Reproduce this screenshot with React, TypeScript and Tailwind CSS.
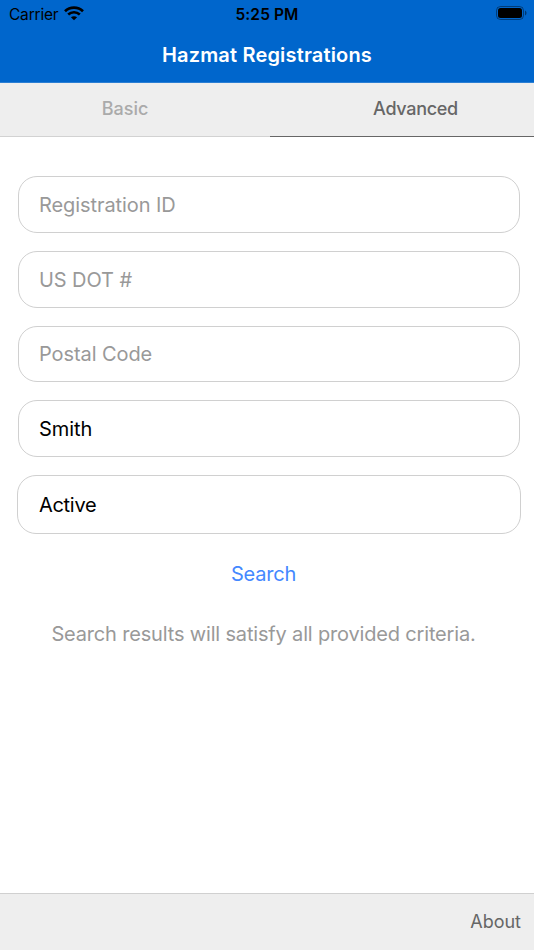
import { useState } from 'react';

const fields = [
  { placeholder: 'Registration ID', value: '' },
  { placeholder: 'US DOT #', value: '' },
  { placeholder: 'Postal Code', value: '' },
  { placeholder: 'Company Name', value: 'Smith' },
];

function StatusBar() {
  return (
    <div className="grid h-7 grid-cols-3 items-center pr-[7px] pl-[9px] text-[16px] text-black">
      <div className="flex items-center gap-1.5">
        <span className="pt-px text-[15.5px] tracking-[-0.2px]">Carrier</span>
        <svg className="-mt-0.5" width="20" height="15" viewBox="0 0 20 15" fill="none" stroke="black">
          <path d="M1 5.2C6 .4 14 .4 19 5.2" strokeWidth="2.7" />
          <path d="M4.2 8.5C7.4 5.5 12.6 5.5 15.8 8.5" strokeWidth="2.6" />
          <path d="M10 14.3L6.9 11.3C8.7 9.8 11.3 9.8 13.1 11.3Z" fill="black" stroke="none" />
        </svg>
      </div>
      <span className="pt-px pr-0.5 text-center text-[15.5px] font-semibold tracking-[0.1px]">5:25 PM</span>
      <svg className="-mt-0.5 justify-self-end" width="31" height="14" viewBox="0 0 31 14">
        <rect x="0.5" y="0.5" width="27" height="13" rx="4" fill="none" stroke="black" strokeOpacity="0.4" />
        <rect x="2" y="2" width="24" height="10" rx="2.5" fill="black" />
        <path d="M29 4.5C31 5.3 31 8.7 29 9.5Z" fill="black" fillOpacity="0.45" />
      </svg>
    </div>
  );
}

export default function App() {
  const [values, setValues] = useState(fields.map((field) => field.value));

  return (
    <div className="flex h-screen flex-col overflow-hidden bg-white font-['Inter',sans-serif]">
      <header className="h-[83px] border-b border-[#2b7fd4] bg-[#0066cc]">
        <StatusBar />
        <h1 className="pt-[12px] text-center text-[20px] leading-[30px] font-semibold tracking-[0.17px] text-white">
          Hazmat Registrations
        </h1>
      </header>

      <nav className="flex h-[54px] bg-[#eeeeee] text-[18px] font-medium">
        <button className="w-[270px] border-b border-[#d2d2d2] pr-5 pb-0.5 text-[#aaaaaa]">Basic</button>
        <button className="flex-1 border-b border-[#666666] pb-0.5 pl-[27px] tracking-[-0.3px] text-[#666666]">
          Advanced
        </button>
      </nav>

      <main className="flex flex-1 flex-col items-center pt-[39px]">
        <div className="flex w-full flex-col gap-[18px] pr-[14px] pl-[18px]">
          {fields.map((field, i) => (
            <input
              key={field.placeholder}
              className="h-[56.8px] w-full rounded-[19px] border border-[#d0d0d0] px-5 pt-px text-[20px] tracking-[-0.08px] text-black outline-none placeholder:text-[#999999]"
              placeholder={field.placeholder}
              value={values[i]}
              onChange={(e) => setValues(values.map((v, j) => (j === i ? e.target.value : v)))}
            />
          ))}
        </div>
        <div className="mt-[18px] w-full pr-[13px] pl-[17px]">
          <button className="h-[59px] w-full rounded-[19px] border border-[#d0d0d0] px-[21px] text-left text-[20px] tracking-[-0.3px] text-black">
            Active
          </button>
        </div>
        <button className="mt-[25px] pr-[7px] text-[20px] leading-[30px] tracking-[-0.2px] text-[#4488ff]">
          Search
        </button>
        <p className="mt-[30px] pr-[7px] text-[20px] leading-[30px] tracking-[-0.17px] text-[#999999]">
          Search results will satisfy all provided criteria.
        </p>
      </main>

      <footer className="flex h-[57px] items-center justify-end border-t border-[#d0d0d0] bg-[#eeeeee] pr-[13px] pb-0.5 text-[18px] text-[#666666]">
        <button>About</button>
      </footer>
    </div>
  );
}
